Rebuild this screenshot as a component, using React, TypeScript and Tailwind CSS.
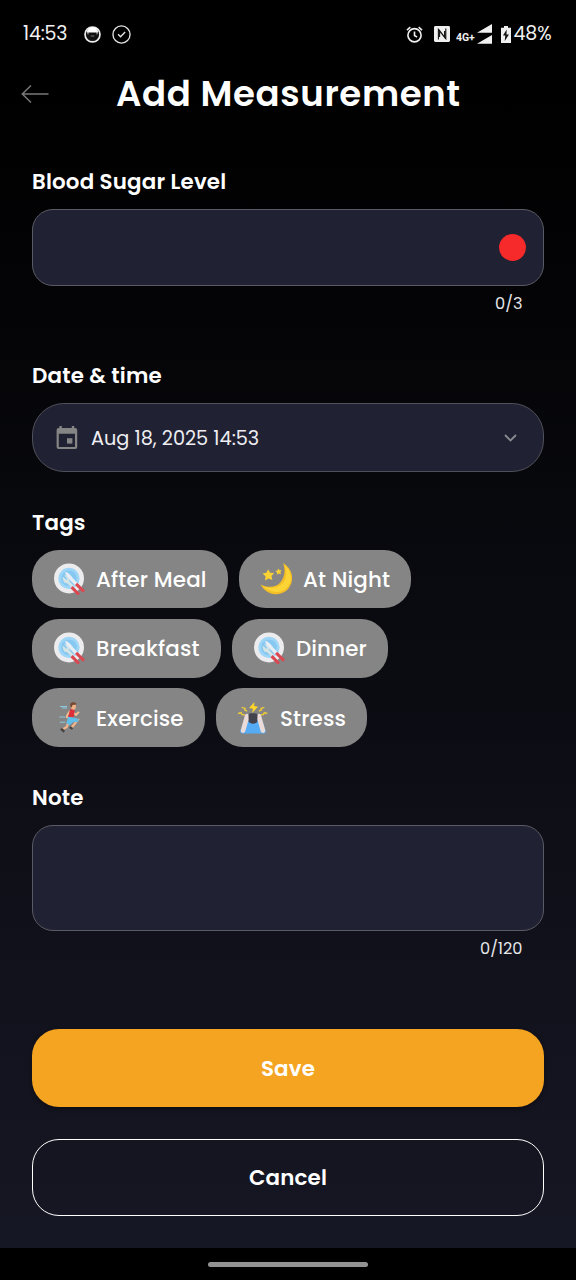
import type { ReactNode } from "react";

type Tag = { label: string; icon: ReactNode; box: string };

const TAGS: Tag[] = [
  { label: "After Meal", icon: <PlateIcon />, box: "w-[196px]" },
  { label: "At Night", icon: <MoonIcon />, box: "w-[172px]" },
  { label: "Breakfast", icon: <PlateIcon />, box: "w-[189px]" },
  { label: "Dinner", icon: <PlateIcon />, box: "w-[156px]" },
  { label: "Exercise", icon: <RunnerIcon />, box: "w-[173px]" },
  { label: "Stress", icon: <StressIcon />, box: "w-[151px]" },
];

export default function App() {
  return (
    <div className="flex h-[1280px] w-[576px] flex-col overflow-hidden bg-black font-['Poppins','Inter',sans-serif] text-white">
      <div className="flex h-[1248px] flex-col bg-linear-to-b/srgb from-black from-8% to-[#161724]">
        <StatusBar />
        <header className="flex h-[52px] items-center pl-[21px]">
          <svg className="h-5 w-7 shrink-0" viewBox="0 0 28 20" fill="none" stroke="#787878" strokeWidth="1.5">
            <path d="M27.5 10H1.5M10 1.5 1.3 10l8.7 8.5" />
          </svg>
          <h1 className="ml-[67px] text-[35.5px] leading-[52px] font-semibold tracking-[0.63px] whitespace-nowrap">
            Add Measurement
          </h1>
        </header>

        <main className="flex flex-col px-8 pt-[45px]">
          <Label>Blood Sugar Level</Label>
          <div className="mt-3 flex h-[77px] items-center justify-end rounded-[21px] border border-[#5a5a64] bg-[#202132] pr-[17.5px]">
            <span className="size-[27px] rounded-full bg-[#f62a2a]" />
          </div>
          <Counter>0/3</Counter>

          <div className="mt-[43px]">
            <Label>Date &amp; time</Label>
          </div>
          <div className="mt-3 flex h-[69px] items-center rounded-[32px] border border-[#50505b] bg-[#202132] pr-[26px] pl-[23px]">
            <svg className="-mt-px size-[23px]" viewBox="0 0 23 23" fill="#858585">
              <path
                fillRule="evenodd"
                d="M3.4 0h2.4v2h10V0h2.4v2h1a2 2 0 0 1 2 2v17a2 2 0 0 1-2 2H2.6a2 2 0 0 1-2-2V4a2 2 0 0 1 2-2h.8V0Zm-.6 7.8V21h16.2V7.8H2.8Z"
              />
              <path d="M11 12.2h5.4v5.4H11z" />
            </svg>
            <span className="ml-[12px] pt-[3px] text-[19.3px] text-[#eeeef2]">Aug 18, 2025 14:53</span>
            <svg className="ml-auto h-2 w-[13px]" viewBox="0 0 13 8" fill="none" stroke="#8b8b92" strokeWidth="1.8">
              <path d="m1 1 5.5 5.5L12 1" />
            </svg>
          </div>

          <div className="mt-[34px]">
            <Label>Tags</Label>
          </div>
          <div className="mt-[11.8px] flex w-[400px] flex-wrap gap-x-[11px] gap-y-[10.6px]">
            {TAGS.map((tag) => (
              <button
                key={tag.label}
                className={`flex h-[58.7px] items-center gap-[11px] rounded-[27px] bg-[#858585] pl-[21px] text-[21.4px] font-medium tracking-[0.15px] whitespace-nowrap ${tag.box}`}
              >
                <span className="size-8 shrink-0">{tag.icon}</span>
                <span className="pt-[2px]">{tag.label}</span>
              </button>
            ))}
          </div>

          <div className="mt-[34px]">
            <Label>Note</Label>
          </div>
          <div className="mt-[12px] h-[106px] rounded-[21px] border border-[#5a5a64] bg-[#202132]" />
          <Counter>0/120</Counter>

          <button className="mt-[68.3px] h-[77.3px] rounded-[27px] bg-[#f5a422] pt-[2px] text-[21.4px] font-semibold tracking-[0.15px] shadow-[0_2px_4px_rgba(0,0,0,0.35)]">
            Save
          </button>
          <button className="mt-[32px] h-[77.3px] rounded-[27px] border-[1.5px] border-white pt-[2px] text-[21.4px] font-semibold tracking-[0.15px]">
            Cancel
          </button>
        </main>
      </div>
      <div className="flex h-8 items-center justify-center">
        <div className="h-[5px] w-40 rounded-full bg-[#929292]" />
      </div>
    </div>
  );
}

function Label({ children }: { children: ReactNode }) {
  return <div className="h-8 pt-px text-[21.4px] leading-8 font-semibold tracking-[0.17px]">{children}</div>;
}

function Counter({ children }: { children: ReactNode }) {
  return (
    <div className="mt-[6px] h-6 pr-[21.5px] text-right text-[16.2px] leading-6 text-[#e6e6ea]">{children}</div>
  );
}

function StatusBar() {
  return (
    <div className="flex h-[68px] items-center pr-[23px] pl-[23px] text-[19px] text-[#f0f0f0]">
      <span className="w-[61px] pt-px tracking-[-0.2px]">14:53</span>
      <svg className="size-[17px]" viewBox="0 0 18 18">
        <circle cx="9" cy="9" r="7.9" fill="#111" stroke="#eee" strokeWidth="1.8" />
        <path d="M3 5.6C4 3 6.2 1.3 9 1.3S14 3 15 5.6l-1 2.8-1.2-1.6H5.2L4 8.4 3 5.6Z" fill="#fff" />
        <path d="M4.3 6.2v3M13.7 6.2v3M7 10.6h4" stroke="#888" strokeWidth="0.9" />
      </svg>
      <svg className="ml-[11px] size-[19px]" viewBox="0 0 20 20" fill="none" stroke="#e8e8e8" strokeWidth="1.4">
        <circle cx="10" cy="10" r="9" />
        <path d="m6.4 9.8 2.6 2.5 4.8-5" />
      </svg>

      <svg className="ml-auto size-[17px]" viewBox="0 0 18 18" fill="none" stroke="#f0f0f0" strokeWidth="1.7">
        <circle cx="9" cy="9.8" r="7" />
        <path d="M9 5.8v4.3l2.7 1.7M1 4.3l3.6-3M17 4.3l-3.6-3" />
      </svg>
      <svg className="ml-[11px] h-4 w-4" viewBox="0 0 16 16">
        <rect width="16" height="16" rx="1.4" fill="#f0f0f0" />
        <path
          d="M4.4 13.6V3.4l6.2 8V5M11.8 2.4v10.2L5.6 4.6V11"
          fill="none"
          stroke="#111"
          strokeWidth="1.1"
        />
      </svg>
      <span className="ml-[6.5px] w-[20.5px] pt-2 font-['Roboto',sans-serif] text-[10.5px] font-bold tracking-[-0.1px]">
        4G+
      </span>
      <svg className="h-5 w-[15px]" viewBox="0 0 15 20" fill="#f0f0f0">
        <path d="M15 0v8.7H0L15 0ZM15 11v8.7H0L15 11Z" />
      </svg>
      <svg className="ml-[9px] h-[17px] w-[10px]" viewBox="0 0 10 17">
        <path d="M3 0h4v1.7h3V17H0V1.7h3V0Z" fill="#f0f0f0" />
        <path d="M5.7 3.4 2 9.4h2.3L3.7 15 8 8.6H5.5l.2-5.2Z" fill="#111" />
      </svg>
      <span className="ml-[3px] w-[39.5px] pt-px tracking-[-0.1px]">48%</span>
    </div>
  );
}

function PlateIcon() {
  return (
    <svg viewBox="0 0 32 32">
      <circle cx="16" cy="15.4" r="15" fill="#ececee" />
      <circle cx="16" cy="15.4" r="10.6" fill="#9ed6f8" />
      <circle cx="16" cy="15.4" r="7.9" fill="#86c8f1" />
      <path d="M12.2 8.7c3 .4 5.5 3.5 7.4 6.1l5.7 6.2-2.2 2.2-7.6-7.6c-2-2.1-3.2-4.2-3.3-6.9Z" fill="#e6edf4" />
      <path d="m9.5 15 1.5 4.5 3 .8 5.5 5.2 2-2-5-5-.6-3.1-4-3.4-.5.6 2.9 3.5-.8.7-3.3-2.9-.7.7v.4Z" fill="#d2e3e6" />
      <path d="m24.2 19.8 7.8 7.7-2.2 2.3-7.8-7.7 2.2-2.3ZM19.7 23.1l7.3 7.3-2.2 2.2-7.3-7.3 2.2-2.2Z" fill="#dc4852" />
    </svg>
  );
}

function MoonIcon() {
  return (
    <svg viewBox="0 0 32 32">
      <path d="M23 0c7.7 4.5 11.6 13.5 7.5 22.1C25.7 33.8 8.3 35.2.4 21.5c7.8 3.6 15.6 3 19.8-2.1C24.4 14.4 25.9 7.4 23 0Z" fill="#f3be27" />
      <path d="M24.3 2.1c6.8 5.8 8.3 13.4 4.7 19.8-4.6 8-17.1 10.2-25.8 1.7 8.5 2.8 15.9.8 20-3.9 3.8-4.5 3.8-11.5 1.1-17.6Z" fill="#fcd435" />
      <path d="m8.1 6.3 2 3.4 4 .2-2.6 3 .8 4-3.7-1.5-3.5 2 .4-4.1-3-2.7 3.9-.8 1.7-3.5ZM18.2 5.4l1.3 1.8 2.2.1-1.3 1.8.6 2.2-2.2-.8-1.8 1.3.1-2.3-1.8-1.4 2.2-.6.7-2.1Z" fill="#fcd233" />
    </svg>
  );
}

function RunnerIcon() {
  return (
    <svg viewBox="0 0 32 32" fill="none">
      <path d="M7 4.5h7M9 6h5M6.4 15h6M6.8 20.2h5.5" stroke="#8dd0e8" strokeWidth="0.9" />
      <path d="m17 9-2.8 4.2-.4 3M21 10.8l1.8 2.2 3.2-3.2" stroke="#f5bd91" strokeWidth="1.9" strokeLinejoin="round" />
      <path d="m21.5 18.5 3-.3-5.7 7.3M15.3 20.4l-1.6 4.6-3.9 2.4" stroke="#f3b68b" strokeWidth="2.2" />
      <path d="M17 7.8c1.6-1.2 3.9-.8 4.6 1l-.9 6.6-5.5-.4L17 7.8Z" fill="#dd2d37" />
      <path d="m15.2 14.8 5.6.6 4.8 1.6-.8 3.1-4.8.2-3.2 3-3.5-2.1 1.9-6.4Z" fill="#62bee9" />
      <ellipse cx="20.4" cy="4.4" rx="2.5" ry="3.3" fill="#efb187" />
      <path d="M17.5 4.2c-1-2.5.8-4.2 3-3.9 2 0 2.8 1 3 2.2l-4 .4-.8 2.8-1.2-1.5Z" fill="#744833" />
      <path d="m9 25.9 3.1 2.6-1.5 2.2L7 27.6l2-1.7ZM17.3 24.2l2.9 1.7-1.2 1.8-2.9-1.8 1.2-1.7Z" fill="#444" />
    </svg>
  );
}

function StressIcon() {
  return (
    <svg viewBox="0 0 32 32">
      <path d="m17.5 0-5.5 6 4 .7-1 4.3 6.1-6.2-4-.8.4-4Z" fill="#fdd52b" />
      <path
        d="m4.7 5.4 3.4 1-.5 1.4 2.5 1.3M27.3 5.4l-3.3 1 .5 1.4-2.6 1.4M1.1 11.5l3-.8.8 1.7 3 .6M30.3 11.5l-3-.8-.8 1.7-3 .6"
        fill="none"
        stroke="#edcb38"
        strokeWidth="1.4"
      />
      <path d="M6.5 19.5c2-1.5 5.5-1.5 9.5-1.5s7.5 0 9.500 1.5l3.2 9.3c.4 1.5-.6 2.7-2 2.7H5.3c-1.5 0-2.4-1.2-2-2.7l3.2-9.3Z" fill="#55acf4" />
      <path d="M10.8 12.5c1.5-1.8 8.9-1.8 10.4 0l-.6 6.5c-.8 3.6-8.2 3.6-9.2 0l-.6-6.5Z" fill="#42434d" />
      <path d="M11.5 12.2c-1.8-1.4-3.6.2-3.9 2.2L3.8 28c-.5 3 3 4.2 4.4 1.6l3.4-11.8-.1-5.6ZM20.5 12.2c1.8-1.4 3.6.2 3.9 2.2L28.2 28c.5 3-3 4.2-4.4 1.6l-3.4-11.8.1-5.6Z" fill="#eadbd9" />
    </svg>
  );
}
